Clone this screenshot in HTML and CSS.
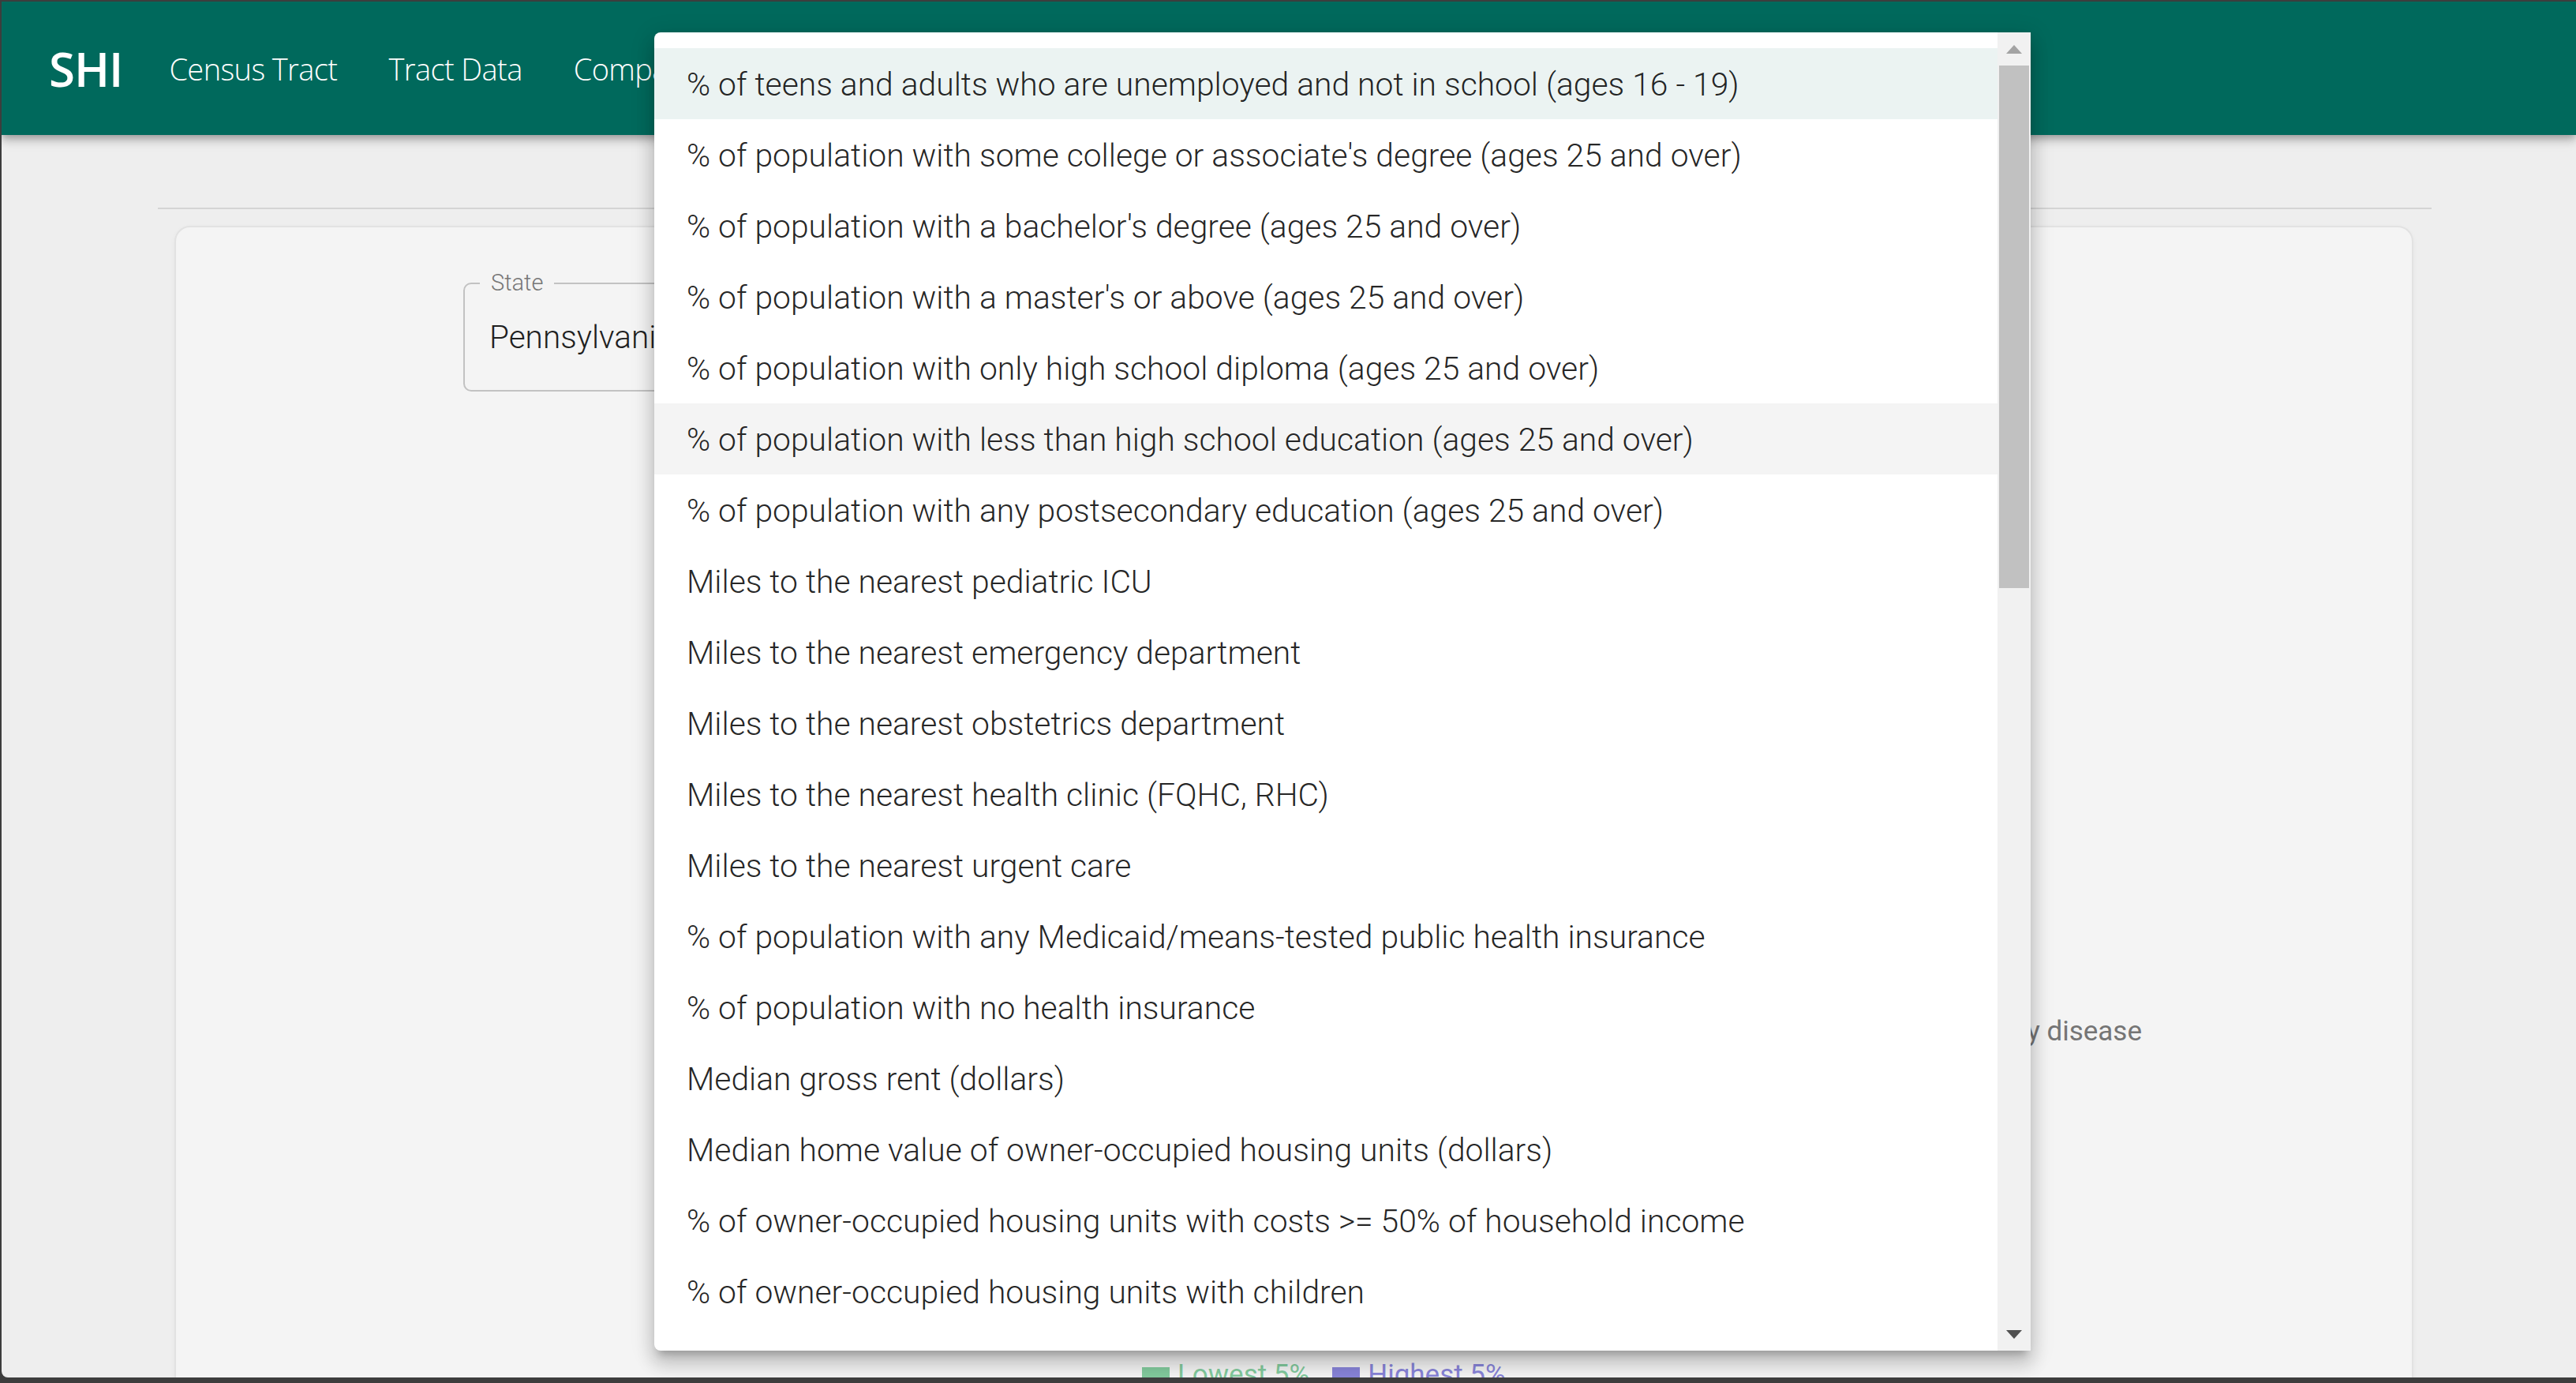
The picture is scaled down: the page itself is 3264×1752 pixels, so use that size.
FILE: index.html
```html
<!DOCTYPE html>
<html lang="en">
<head>
<meta charset="utf-8">
<title>SHI</title>
<link rel="stylesheet" href="styles.css">
</head>
<body>
<div class="app">
  <header class="topbar">
    <span class="brand">SHI</span>
    <nav class="nav">
      <a class="nav-link">Census Tract</a>
      <a class="nav-link">Tract Data</a>
      <a class="nav-link">Compare</a>
      <a class="nav-link">About</a>
    </nav>
  </header>

  <main class="main">
    <div class="divider"></div>
    <section class="card">
      <div class="field-row">
        <div class="field">
          <span class="field-label">State</span>
          <span class="field-value">Pennsylvania</span>
        </div>
      </div>
      <div class="hint-row"><span class="hint">Chronic kidney disease</span></div>
      <div class="legend">
        <span class="legend-item legend-low"><span class="legend-swatch"></span>Lowest 5%</span>
        <span class="legend-item legend-high"><span class="legend-swatch"></span>Highest 5%</span>
      </div>
    </section>
  </main>

  <div class="menu">
    <ul class="menu-list">
      <li class="menu-item selected">% of teens and adults who are unemployed and not in school (ages 16 - 19)</li>
      <li class="menu-item">% of population with some college or associate's degree (ages 25 and over)</li>
      <li class="menu-item">% of population with a bachelor's degree (ages 25 and over)</li>
      <li class="menu-item">% of population with a master's or above (ages 25 and over)</li>
      <li class="menu-item">% of population with only high school diploma (ages 25 and over)</li>
      <li class="menu-item hovered">% of population with less than high school education (ages 25 and over)</li>
      <li class="menu-item">% of population with any postsecondary education (ages 25 and over)</li>
      <li class="menu-item">Miles to the nearest pediatric ICU</li>
      <li class="menu-item">Miles to the nearest emergency department</li>
      <li class="menu-item">Miles to the nearest obstetrics department</li>
      <li class="menu-item">Miles to the nearest health clinic (FQHC, RHC)</li>
      <li class="menu-item">Miles to the nearest urgent care</li>
      <li class="menu-item">% of population with any Medicaid/means-tested public health insurance</li>
      <li class="menu-item">% of population with no health insurance</li>
      <li class="menu-item">Median gross rent (dollars)</li>
      <li class="menu-item">Median home value of owner-occupied housing units (dollars)</li>
      <li class="menu-item">% of owner-occupied housing units with costs &gt;= 50% of household income</li>
      <li class="menu-item">% of owner-occupied housing units with children</li>
    </ul>
    <div class="scrollbar">
      <div class="sb-button"><span class="arrow-up"></span></div>
      <div class="sb-thumb"></div>
      <div class="sb-space"></div>
      <div class="sb-button"><span class="arrow-down"></span></div>
    </div>
  </div>
</div>
</body>
</html>
```

FILE: styles.css
```css
html {
  background: #3d3d3d;
}

body {
  margin: 0;
  font-family: Roboto, "Liberation Sans", sans-serif;
}

.app {
  position: relative;
  margin: 2px 0 0 2px;
  height: 1743px;
  overflow: hidden;
  background: #eeeeee;
  border-bottom-left-radius: 8px;
}

/* ---------- top bar ---------- */
.topbar {
  position: relative;
  z-index: 2;
  height: 169px;
  display: flex;
  align-items: center;
  padding-left: 60px;
  background: #00695c;
  color: #ffffff;
  box-shadow: 0 4px 8px -2px rgba(0,0,0,0.2), 0 8px 10px 0 rgba(0,0,0,0.14), 0 2px 20px 0 rgba(0,0,0,0.12);
  font-family: "Open Sans", "Noto Sans", sans-serif;
}

.brand {
  font-size: 60px;
  font-weight: 600;
  letter-spacing: -1px;
}

.nav {
  display: flex;
  gap: 65px;
  margin-left: 59px;
}

.nav-link {
  font-size: 38px;
  font-weight: 300;
  letter-spacing: -0.6px;
  color: #ffffff;
}

/* ---------- main ---------- */
.main {
  padding-top: 92px;
  padding-left: 198px;
}

.divider {
  width: 2881px;
  height: 2px;
  background: #d4d4d4;
}

.card {
  box-sizing: border-box;
  width: 2837px;
  height: 1520px;
  margin: 21px 0 0 21px;
  padding-top: 70px;
  background: #f4f4f4;
  border: 2px solid #e2e2e2;
  border-radius: 20px;
  box-shadow: 0 2px 6px rgba(0,0,0,0.04);
}

.field-row {
  padding-left: 364px;
}

.field {
  position: relative;
  box-sizing: border-box;
  width: 760px;
  height: 138px;
  display: flex;
  align-items: center;
  padding-left: 31px;
  border: 2px solid #c2c2c2;
  border-radius: 10px;
}

.field-label {
  position: absolute;
  left: 19px;
  top: -22px;
  padding: 0 14px;
  line-height: 40px;
  font-size: 29px;
  font-weight: 300;
  color: #777777;
  background: #f4f4f4;
}

.field-value {
  font-size: 40.5px;
  font-weight: 300;
  color: #1f1f1f;
}

.hint-row {
  margin-top: 790px;
  padding-right: 342px;
  text-align: right;
}

.hint {
  font-size: 35px;
  line-height: 42px;
  color: #757575;
}

.legend {
  display: flex;
  gap: 29px;
  margin-top: 393px;
  padding-left: 1224px;
}

.legend-item {
  display: flex;
  align-items: flex-start;
  gap: 10px;
  font-size: 35px;
  line-height: 42px;
}

.legend-swatch {
  width: 35px;
  height: 35px;
  margin-top: 11px;
}

.legend-low { color: #82ca9d; }
.legend-low .legend-swatch { background: #82ca9d; }
.legend-high { color: #8884d8; }
.legend-high .legend-swatch { background: #8884d8; }

/* ---------- dropdown menu ---------- */
.menu {
  position: absolute;
  z-index: 10;
  left: 827px;
  top: 39px;
  width: 1744px;
  height: 1670px;
  display: flex;
  background: #ffffff;
  border-radius: 8px 0 0 8px;
  box-shadow: 0 10px 10px -6px rgba(0,0,0,0.2), 0 17px 21px 2px rgba(0,0,0,0.14), 0 6px 29px 4px rgba(0,0,0,0.12);
}

.menu-list {
  flex: 1;
  margin: 0;
  padding: 20px 0 0 0;
  list-style: none;
  overflow: hidden;
  border-radius: 8px 0 0 8px;
}

.menu-item {
  height: 90px;
  display: flex;
  align-items: center;
  padding-left: 41px;
  padding-top: 2px;
  box-sizing: border-box;
  font-size: 40.8px;
  font-weight: 300;
  color: rgba(0,0,0,0.87);
  white-space: nowrap;
}

.menu-item.selected {
  background: #ebf3f2;
}

.menu-item.hovered {
  background: #f4f4f4;
}

.scrollbar {
  width: 42px;
  display: flex;
  flex-direction: column;
  background: #f1f1f1;
}

.sb-button {
  height: 42px;
  display: flex;
  align-items: center;
  justify-content: center;
}

.arrow-up {
  width: 0;
  height: 0;
  border-left: 10.5px solid transparent;
  border-right: 10.5px solid transparent;
  border-bottom: 11px solid #a3a3a3;
}

.arrow-down {
  width: 0;
  height: 0;
  border-left: 10.5px solid transparent;
  border-right: 10.5px solid transparent;
  border-top: 11px solid #505050;
}

.sb-thumb {
  height: 662px;
  margin: 0 2px;
  background: #c1c1c1;
}

.sb-space {
  flex: 1;
}
```
